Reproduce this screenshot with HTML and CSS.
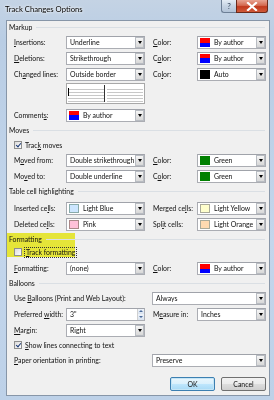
FILE: index.html
```html
<!DOCTYPE html>
<html>
<head>
<meta charset="utf-8">
<link rel="stylesheet" href="styles.css">
</head>
<body>
<div class="window">
  <div class="titlebar">
    <span class="title">Track Changes Options</span>
    <div class="caption">
      <span class="cbtn help">?</span>
      <span class="cbtn close">
        <svg width="12" height="9" viewBox="0 0 12 9"><path d="M2 1 L10 8 M10 1 L2 8" stroke="#fff" stroke-width="2.2" stroke-linecap="square"/></svg>
      </span>
    </div>
  </div>
  <div class="client">
    <div class="heading h-markup"><span>Markup</span></div>
    <div class="row">
      <span class="lbl"><u>I</u>nsertions:</span>
      <div class="dd"><span class="txt">Underline</span><span class="arr"></span></div>
      <span class="lbl clbl"><u>C</u>olor:</span>
      <div class="dd"><span class="sw rb"></span><span class="txt">By author</span><span class="arr"></span></div>
    </div>
    <div class="row">
      <span class="lbl"><u>D</u>eletions:</span>
      <div class="dd"><span class="txt">Strikethrough</span><span class="arr"></span></div>
      <span class="lbl clbl">C<u>o</u>lor:</span>
      <div class="dd"><span class="sw rb"></span><span class="txt">By author</span><span class="arr"></span></div>
    </div>
    <div class="row">
      <span class="lbl">Ch<u>a</u>nged lines:</span>
      <div class="dd"><span class="txt">Outside border</span><span class="arr"></span></div>
      <span class="lbl clbl">Co<u>l</u>or:</span>
      <div class="dd"><span class="sw black"></span><span class="txt">Auto</span><span class="arr"></span></div>
    </div>
    <div class="row preview-row">
      <span></span>
      <div class="preview">
        <div class="pane left"><span class="bar"></span></div>
        <div class="pane right"></div>
      </div>
    </div>
    <div class="row">
      <span class="lbl">Comment<u>s</u>:</span>
      <div class="dd"><span class="sw rb"></span><span class="txt">By author</span><span class="arr"></span></div>
    </div>

    <div class="heading h-moves"><span>Moves</span></div>
    <div class="check-row tm"><span class="cb checked"></span><span>Trac<u>k</u> moves</span></div>
    <div class="row">
      <span class="lbl">M<u>o</u>ved from:</span>
      <div class="dd"><span class="txt">Double strikethrough</span><span class="arr"></span></div>
      <span class="lbl clbl"><u>C</u>olor:</span>
      <div class="dd"><span class="sw green"></span><span class="txt">Green</span><span class="arr"></span></div>
    </div>
    <div class="row">
      <span class="lbl">Mo<u>v</u>ed to:</span>
      <div class="dd"><span class="txt">Double underline</span><span class="arr"></span></div>
      <span class="lbl clbl">C<u>o</u>lor:</span>
      <div class="dd"><span class="sw green"></span><span class="txt">Green</span><span class="arr"></span></div>
    </div>

    <div class="heading h-table"><span>Table cell highlighting</span></div>
    <div class="row">
      <span class="lbl">Inserted ce<u>l</u>ls:</span>
      <div class="dd"><span class="sw lblue"></span><span class="txt">Light Blue</span><span class="arr"></span></div>
      <span class="lbl clbl">Merged ce<u>l</u>ls:</span>
      <div class="dd"><span class="sw lyellow"></span><span class="txt">Light Yellow</span><span class="arr"></span></div>
    </div>
    <div class="row">
      <span class="lbl">Deleted ce<u>l</u>ls:</span>
      <div class="dd"><span class="sw pink"></span><span class="txt">Pink</span><span class="arr"></span></div>
      <span class="lbl clbl">Spl<u>i</u>t cells:</span>
      <div class="dd"><span class="sw lorange"></span><span class="txt">Light Orange</span><span class="arr"></span></div>
    </div>

    <div class="hl-group">
      <div class="heading h-format"><span>Formatting</span></div>
      <div class="check-row tf"><span class="cb"></span><span class="focus"><u>T</u>rack formatting</span></div>
    </div>
    <div class="row">
      <span class="lbl"><u>F</u>ormatting:</span>
      <div class="dd"><span class="txt">(none)</span><span class="arr"></span></div>
      <span class="lbl clbl"><u>C</u>olor:</span>
      <div class="dd"><span class="sw rb"></span><span class="txt">By author</span><span class="arr"></span></div>
    </div>

    <div class="heading h-balloons"><span>Balloons</span></div>
    <div class="row wide">
      <span class="lbl">Use <u>B</u>alloons (Print and Web Layout):</span>
      <div class="dd"><span class="txt">Always</span><span class="arr"></span></div>
    </div>
    <div class="row">
      <span class="lbl">Preferred <u>w</u>idth:</span>
      <div class="dd spin"><span class="txt">3"</span><span class="spinbtn"><i class="up"></i><i class="down"></i></span></div>
      <span class="lbl clbl">M<u>e</u>asure in:</span>
      <div class="dd"><span class="txt">Inches</span><span class="arr"></span></div>
    </div>
    <div class="row">
      <span class="lbl"><u>M</u>argin:</span>
      <div class="dd"><span class="txt">Right</span><span class="arr"></span></div>
    </div>
    <div class="check-row sl"><span class="cb checked"></span><span><u>S</u>how lines connecting to text</span></div>
    <div class="row wide">
      <span class="lbl"><u>P</u>aper orientation in printing:</span>
      <div class="dd"><span class="txt">Preserve</span><span class="arr"></span></div>
    </div>

    <div class="buttons">
      <span class="btn ok">OK</span>
      <span class="btn">Cancel</span>
    </div>
  </div>
</div>
</body>
</html>
```

FILE: styles.css
```css
* { box-sizing: border-box; }
html, body { margin: 0; padding: 0; }
body {
  width: 274px;
  height: 400px;
  overflow: hidden;
  font-family: Lato, "Noto Sans", sans-serif;
  font-size: 6.9px;
  color: #111;
}
.window {
  width: 274px;
  height: 400px;
  background: linear-gradient(180deg, #c4d3e4 0%, #b9cde4 10%, #c3d6ec 60%, #bdd1e8 100%);
  padding: 0 4px 4px 6px;
  display: flex;
  flex-direction: column;
}
.titlebar {
  height: 20px;
  flex: none;
  display: flex;
  align-items: flex-start;
  justify-content: space-between;
  margin-left: -1px;
}
.title {
  font-size: 7.7px;
  line-height: 8px;
  margin-top: 5px;
  color: #000;
  text-shadow: 0 0 4px #fff, 0 0 2px #fff;
}
.caption {
  display: flex;
  margin-right: 2px;
}
.cbtn {
  height: 13px;
  display: flex;
  align-items: center;
  justify-content: center;
  border: 1px solid #6d7f96;
  border-top: none;
}
.help {
  width: 15px;
  border-radius: 0 0 0 3px;
  background: linear-gradient(180deg, #e4ecf5 0%, #c5d3e3 50%, #b3c4d8 100%);
  color: #34445a;
  font-size: 8px;
  border-right: none;
}
.close {
  width: 32px;
  border-radius: 0 0 3px 0;
  background: linear-gradient(180deg, #e8a493 0%, #d46a51 45%, #c2391d 55%, #cf5a3a 100%);
  border-color: #6b2a1b;
}
.client {
  flex: 1;
  background: #f0f0f0;
  border: 1px solid #8796a8;
  padding: 0 3px 0 2px;
  display: flex;
  flex-direction: column;
}
.heading {
  height: 14px;
  display: flex;
  align-items: center;
  padding-left: 0;
}
.heading::after {
  content: "";
  flex: 1;
  height: 1px;
  background: #dadfe4;
  margin-left: 4px;
  margin-right: 1px;
}
.h-markup { height: 12px; margin-bottom: 1px; }
.h-table { margin-bottom: 2px; }
.row {
  display: grid;
  grid-template-columns: 52px 79px 52px 69px;
  align-items: center;
  height: 16px;
  padding-left: 5px;
}
.row.wide {
  grid-template-columns: 138px 114px;
}
.lbl {
  white-space: nowrap;
}
.clbl { padding-left: 8px; }
.dd {
  height: 13px;
  background: #fff;
  border: 1px solid #abadb3;
  border-top-color: #a0a3aa;
  display: flex;
  align-items: center;
  padding-left: 1px;
}
.txt {
  flex: 1;
  padding-left: 2px;
  white-space: nowrap;
  overflow: hidden;
}
.arr {
  width: 9px;
  height: 11px;
  border: 1px solid #b8bcc2;
  background: linear-gradient(180deg, #f6f6f6 0%, #e6e6e6 50%, #d8d8d8 100%);
  display: flex;
  align-items: center;
  justify-content: center;
  margin-right: 0;
  flex: none;
}
.arr::before {
  content: "";
  border-left: 2.5px solid transparent;
  border-right: 2.5px solid transparent;
  border-top: 3px solid #000;
}
.sw {
  width: 10px;
  height: 9px;
  margin-left: 1px;
  margin-right: 2px;
  flex: none;
}
.rb { background: linear-gradient(180deg, #ff0000 0 50%, #0000ff 50% 100%); }
.black { background: #000; }
.green { background: #008000; }
.lblue { background: #cce6ff; border: 1px solid #8aa; }
.pink { background: #ffc0d8; border: 1px solid #a88; }
.lyellow { background: #ffffcc; border: 1px solid #aa9; }
.lorange { background: #ffdab0; border: 1px solid #aa9; }
.preview-row { height: 25px; align-items: start; }
.preview {
  margin-top: 1px;
  height: 21px;
  border: 1px solid #a8a8a8;
  background: #fff;
  display: flex;
}
.pane {
  flex: 1;
  position: relative;
  background:
    linear-gradient(180deg, #fff 0 3px, transparent 3px),
    repeating-linear-gradient(180deg, #fff 0 1px, #c8c8c8 1px 2px, #fff 2px 3px);
  margin: 1px 1px;
}
.pane.left { border-right: 1px solid #333; margin-right: 1px; }
.bar {
  position: absolute;
  left: 0;
  top: 3px;
  width: 1px;
  height: 8px;
  background: #000;
}
.check-row {
  display: flex;
  align-items: center;
  height: 14px;
  padding-left: 5px;
  gap: 3px;
}
.tm { height: 15px; }
.cb {
  width: 8px;
  height: 8px;
  border: 1px solid #8e8f8f;
  background: linear-gradient(135deg, #dcdcdc, #fdfdfd);
  position: relative;
  flex: none;
}
.cb.checked::after {
  content: "";
  position: absolute;
  left: 2px;
  top: 0px;
  width: 2px;
  height: 4px;
  border-right: 1.3px solid #1c3b79;
  border-bottom: 1.3px solid #1c3b79;
  transform: rotate(40deg);
}
.hl-group {
  position: relative;
  margin-bottom: 2px;
}
.hl-group::before {
  content: "";
  position: absolute;
  left: -2px;
  top: 1px;
  width: 68px;
  height: 24px;
  background: #f4f43c;
  mix-blend-mode: multiply;
}
.hl-group .heading, .hl-group .check-row { position: relative; }
.tf { height: 12px; gap: 2px; }
.focus {
  border: 1px dotted #333;
  padding: 0 1px;
  line-height: 9px;
}
.spin { padding-right: 0; }
.spinbtn {
  width: 7px;
  height: 11px;
  display: flex;
  flex-direction: column;
  border-left: 1px solid #d0d0d0;
}
.spinbtn i {
  flex: 1;
  display: flex;
  align-items: center;
  justify-content: center;
  background: linear-gradient(180deg, #eef3fa, #d9e3ef);
}
.spinbtn .up::before {
  content: "";
  border-left: 2px solid transparent;
  border-right: 2px solid transparent;
  border-bottom: 2px solid #4a6a9a;
}
.spinbtn .down::before {
  content: "";
  border-left: 2px solid transparent;
  border-right: 2px solid transparent;
  border-top: 2px solid #4a6a9a;
}
.sl { height: 14px; }
.buttons {
  display: flex;
  justify-content: flex-end;
  gap: 6px;
  margin-top: 9px;
  padding-right: 0;
}
.btn {
  width: 45px;
  height: 14px;
  display: flex;
  align-items: center;
  justify-content: center;
  border: 1px solid #707070;
  border-radius: 2px;
  background: linear-gradient(180deg, #f2f2f2 0%, #ebebeb 50%, #dddddd 51%, #cfcfcf 100%);
}
.btn.ok {
  border-color: #3c7fb1;
  box-shadow: inset 0 0 0 1px #c4e5f6;
  background: linear-gradient(180deg, #eaf6fd 0%, #d9f0fc 50%, #bee6fd 51%, #a7d9f5 100%);
}
```
